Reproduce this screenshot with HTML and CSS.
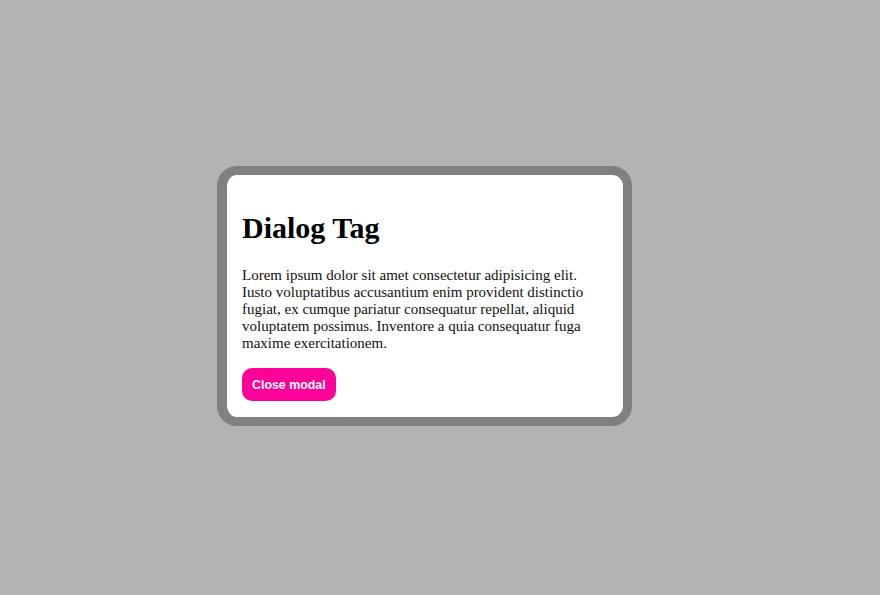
FILE: index.html
```html
<!DOCTYPE html>
<html>
<head>
<meta charset="utf-8">
<link rel="stylesheet" href="styles.css">
</head>
<body>
<div class="stage">
  <div class="dialog">
    <h1 class="title">Dialog Tag</h1>
    <p class="text">Lorem ipsum dolor sit amet consectetur adipisicing elit. Iusto voluptatibus accusantium enim provident distinctio fugiat, ex cumque pariatur consequatur repellat, aliquid voluptatem possimus. Inventore a quia consequatur fuga maxime exercitationem.</p>
    <button class="close">Close modal</button>
  </div>
</div>
</body>
</html>
```
FILE: styles.css
```css
html, body {
  margin: 0;
  padding: 0;
}
body {
  background: #b3b3b3;
  font-family: "Liberation Serif", "Times New Roman", serif;
  min-height: 100vh;
}
.stage {
  padding: 166px 0 0 217px;
  display: flex;
  align-items: flex-start;
}
.dialog {
  width: 366px;
  background: #fff;
  border: 9px solid #808080;
  border-left-width: 10px;
  border-radius: 20px;
  padding: 16px 15px 16px 15px;
  box-sizing: content-box;
}
.title {
  font-size: 30px;
  font-weight: bold;
  margin: 20px 0 22px;
  color: #000;
}
.text {
  font-size: 15px;
  margin: 0 0 16px;
  color: #111;
}
.close {
  font-family: "Liberation Sans", Arial, sans-serif;
  font-weight: bold;
  font-size: 12.4px;
  color: #fff;
  background: #ff0099;
  border: none;
  border-radius: 10px;
  height: 33px;
  padding: 0 10px;
  display: block;
}
```
